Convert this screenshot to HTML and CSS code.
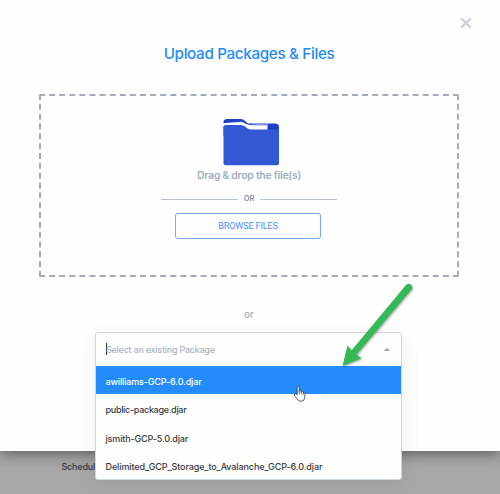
FILE: index.html
```html
<!DOCTYPE html>
<html lang="en">
<head>
<meta charset="utf-8">
<title>Upload Packages &amp; Files</title>
<link rel="stylesheet" href="styles.css">
</head>
<body>
<main class="modal">
  <button class="close" aria-label="Close"><svg width="12" height="12" viewBox="0 0 12 12"><path d="M1.3 1.3L10.7 10.7M10.7 1.3L1.3 10.7"/></svg></button>
  <h1 class="title">Upload Packages &amp; Files</h1>
  <section class="dropzone">
    <svg class="folder" width="58" height="48" viewBox="0 0 58 48">
      <path d="M1.5 6V3.5Q2 1 5 1H19Q21 1 23 3L26 5.5H54Q57 6 57 9V18H1.5Z" fill="#203fc8"/>
      <path d="M0 5.2L20 3.8L24 6L28 7L45.500 5.800V12H10L0 7.500Z" fill="#fff"/>
      <path d="M29 7.2L45 6.2V7.3Z" fill="#203fc8"/>
      <path d="M1.500 9Q1.500 7 4 7H19Q21 7 23 8.500L25.500 10.400Q27 11.500 29 11.500H57V45.500Q57 47.300 55 47.300H3.500Q1.500 47.300 1.500 45.500Z" fill="#3358d3"/>
    </svg>
    <p class="hint">Drag &amp; drop the file(s)</p>
    <div class="divider"><span>OR</span></div>
    <button class="browse">BROWSE FILES</button>
  </section>
  <p class="or">or</p>
  <div class="select">
    <div class="field"><i class="caret"></i><span>Select an existing Package</span><i class="arrow"></i></div>
    <ul class="menu">
      <li class="active">awilliams-GCP-6.0.djar</li>
      <li class="public">public-package.djar</li>
      <li>jsmith-GCP-5.0.djar</li>
      <li class="long">Delimited_GCP_Storage_to_Avalanche_GCP-6.0.djar</li>
    </ul>
  </div>
</main>
<footer class="page"><span>Scheduled</span></footer>
<svg class="pointer-arrow" width="90" height="100" viewBox="335 275 90 100"><path d="M342.500 366L347.500 345.500L351.500 350.500L406.200 284.700A3.600 3.600 0 0 1 411.600 289.300L356.500 354.500L361.300 358.200Z"/></svg>
<svg class="hand" width="14" height="18" viewBox="0 0 14 18"><path d="M4.200 9.800V2Q4.300 1 5.200 1Q6.100 1 6.200 2V6.500Q6.500 5.500 7.400 5.700Q8.300 5.900 8.300 6.800Q8.800 6 9.600 6.300Q10.500 6.600 10.500 7.400Q11.600 6.900 11.900 8.200V11.500Q11.700 13.500 10.500 15.500Q7.500 17.300 5.200 15.300L2 11.400Q.8 9.800 1.400 9.100Q2.200 8.400 3.400 9.500ZM6.200 6.500V9M8.300 6.800V9.300M10.500 7.400V9.500"/></svg>
</body>
</html>
```
FILE: styles.css
```css
* { box-sizing: border-box; }
body { margin: 0; height: 494px; overflow: hidden; position: relative; background: #a8a8a8; font-family: Inter, sans-serif; }
h1, p, ul { margin: 0; padding: 0; }
button { padding: 0; background: none; }
.modal { height: 451px; position: relative; display: flex; flex-direction: column; align-items: center; background: #fefefe; box-shadow: 0 2px 14px rgba(0,0,0,.5); padding-right: 2px; }
.modal > * { flex: none; }
.close { position: absolute; left: 460px; top: 17px; width: 12px; height: 12px; border: 0; }
.close svg { display: block; fill: none; stroke: #ced4dd; stroke-width: 2.6; }
.title { margin-top: 44px; font: 500 15.200px/20px Inter, sans-serif; letter-spacing: -.33px; color: #238cf9; white-space: nowrap; }
.dropzone { margin-top: 30px; width: 420px; height: 183px; border: 2px dashed #a4a9bf; border-radius: 2px; padding-top: 22px; display: flex; flex-direction: column; align-items: center; }
.folder { flex: none; margin-left: 3px; }
.hint { height: 15px; margin-top: 2px; font: 600 10.500px/15px Inter, sans-serif; letter-spacing: -.3px; color: #a2b0c3; }
.divider { display: flex; width: 176px; height: 12px; margin-top: 10px; align-items: center; gap: 6px; }
.divider::before, .divider::after { content: ""; flex: 1; height: 1px; background: #b9c0ce; }
.divider span { font-size: 7.500px; font-weight: 600; color: #8490a5; line-height: 12px; }
.browse { width: 146px; height: 26px; margin-top: 8px; border: 1px solid #78aaf8; border-radius: 3px; color: #4e91f8; font: 9.200px/24px Roboto, sans-serif; letter-spacing: -.2px; position: relative; left: -1px; }
.or { margin-top: 30px; line-height: 15px; font-size: 10px; font-weight: 500; color: #a7b0c1; }
.select { width: 307px; height: 148px; margin-top: 10px; background: #fefefe; border: 1px solid #d1d6dd; border-radius: 3px; box-shadow: 0 5px 20px rgba(0,0,0,.07); position: relative; left: -.5px; z-index: 2; }
.field { height: 33px; display: flex; align-items: center; padding: 0 11px 1px 10px; font-size: 9px; font-weight: 500; letter-spacing: -.25px; color: #acb4c0; }
.caret { width: 1px; height: 12px; background: #333; margin-right: -1px; }
.arrow { margin-left: auto; border: 3px solid transparent; border-top: 0; border-bottom-color: #929eb2; }
.menu { list-style: none; font-size: 9px; font-weight: 500; letter-spacing: -.15px; color: #373a3d; }
.menu li { height: 28.300px; line-height: 32px; padding-left: 9.500px; white-space: nowrap; }
.menu .public { letter-spacing: -.3px; }
.menu .long { letter-spacing: -.11px; }
.menu .active { background: #238cfa; color: #fff; }
.page { padding: 9px 0 0 61.500px; font-size: 9px; line-height: 14px; font-weight: 500; letter-spacing: -.2px; color: #333638; }
.pointer-arrow { position: absolute; left: 335px; top: 275px; z-index: 4; fill: #34b957; filter: drop-shadow(1px 1px 1px rgba(0,0,0,.35)); }
.hand { position: absolute; left: 293px; top: 385px; z-index: 4; fill: #fff; stroke: #30343b; stroke-width: .8; }
```
